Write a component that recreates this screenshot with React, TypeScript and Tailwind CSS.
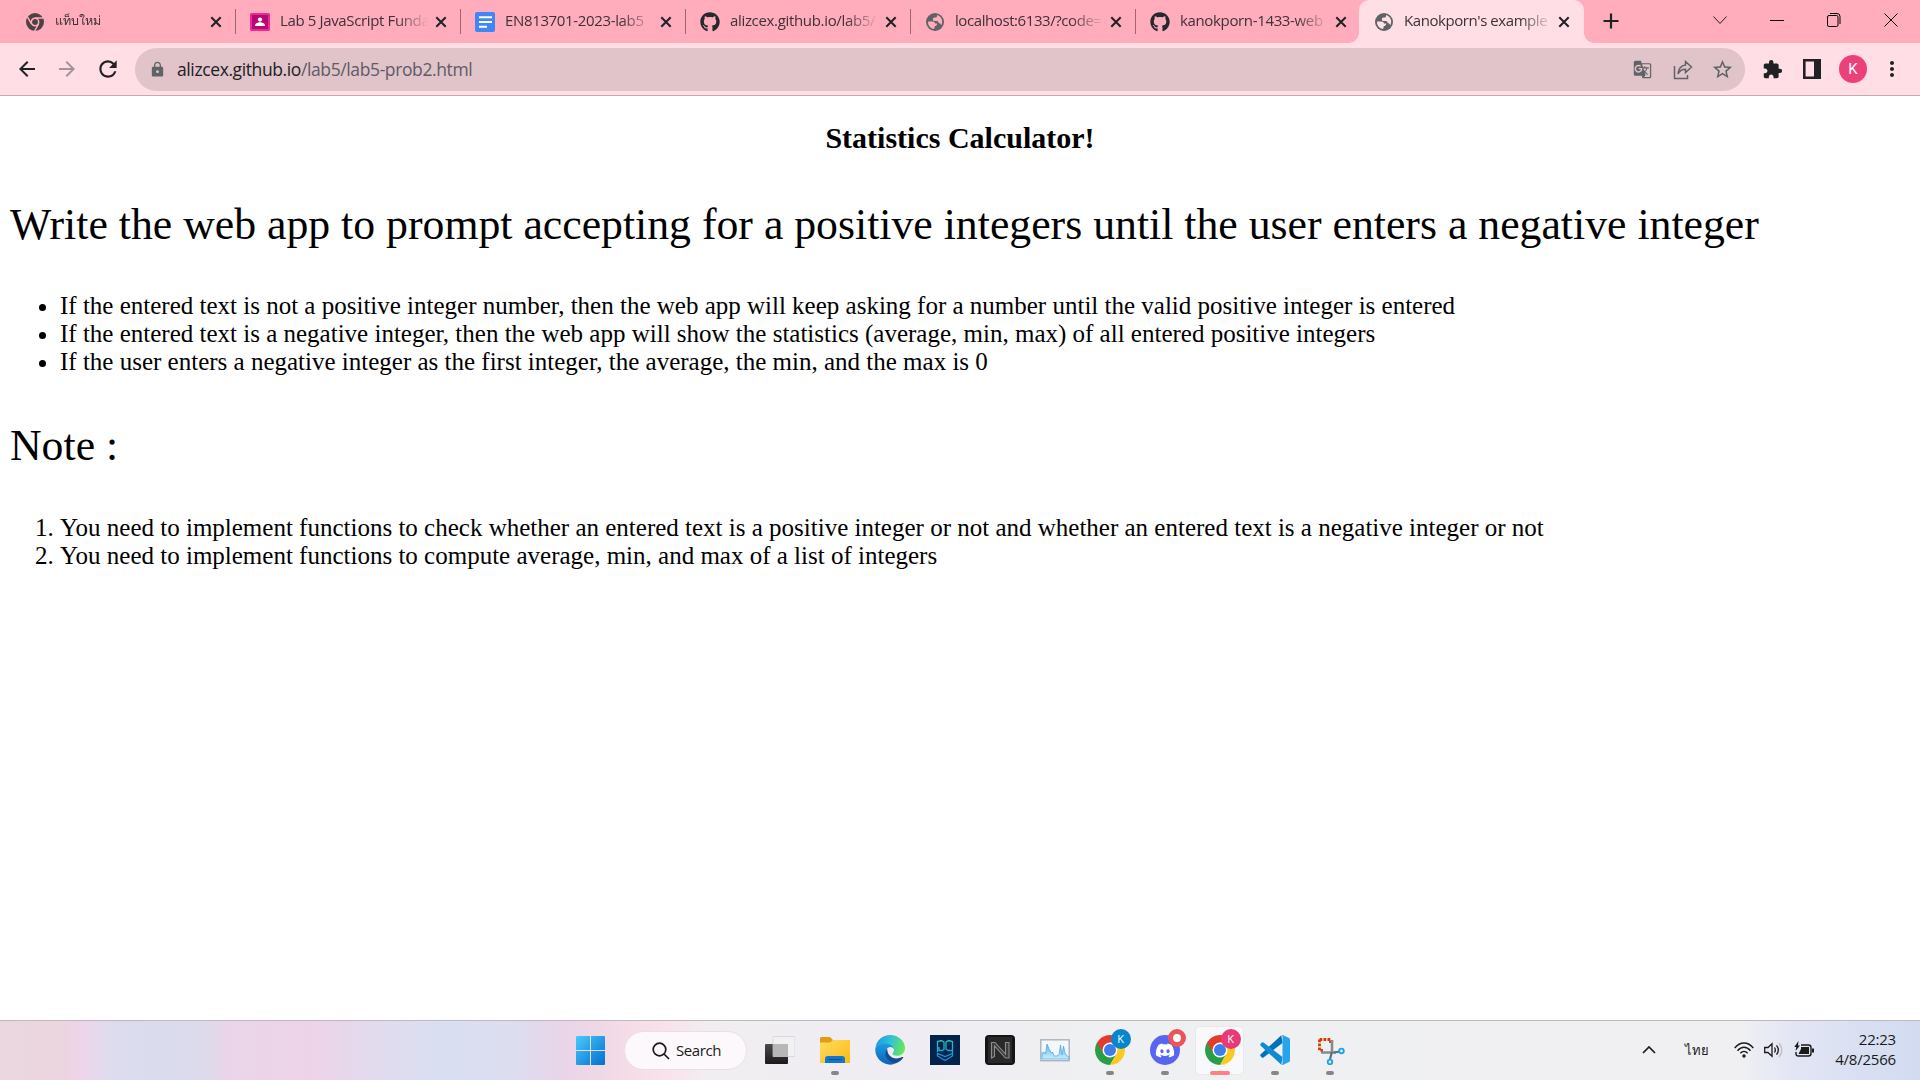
import React from "react";
import { FaGithub, FaDiscord } from "react-icons/fa";
import { MdExtension, MdStarBorder, MdMoreVert, MdLock, MdArrowBack, MdArrowForward, MdRefresh, MdGTranslate } from "react-icons/md";

type TabData = { icon: React.ReactNode; title: string; active?: boolean; spacing: string };

function ChromeMono() {
  return (
    <svg viewBox="0 0 18 18" className="h-[18px] w-[18px]">
      <circle cx="9" cy="9" r="9" fill="#4b4246" />
      <circle cx="9" cy="9" r="3.7" fill="none" stroke="#ffadbc" strokeWidth="1.5" />
      <path d="M9 4.9h8M5.500 11 1.600 4.200M12.500 11 8.600 18" stroke="#ffadbc" strokeWidth="1.5" />
    </svg>
  );
}

function Classroom() {
  return (
    <svg viewBox="0 0 20 18" className="h-[18px] w-5">
      <rect width="20" height="18" rx="1.5" fill="#f02895" />
      <rect x="2" y="2" width="16" height="14" fill="#b80672" />
      <circle cx="10" cy="6.6" r="2.1" fill="#fff" />
      <path d="M5 13c0-3 3-3.700 5-3.700s5 .7 5 3.700z" fill="#fff" />
    </svg>
  );
}

function Docs() {
  return (
    <svg viewBox="0 0 20 20" className="h-5 w-5">
      <rect width="20" height="20" rx="2" fill="#4285f4" />
      <path d="M4 5.200h13M4 10h13M4 14.800h8" stroke="#fff" strokeWidth="1.9" />
    </svg>
  );
}

function Globe({ land }: { land: string }) {
  return (
    <svg viewBox="0 0 18 18" className="h-[18px] w-[18px]">
      <circle cx="9" cy="9" r="9" fill="#5f6368" />
      <g fill={land}>
        <path d="M2 8.400h5q2 .2 2 2.100h2.200q0 2-1.400 2.400H8.700v1.700q-.3 1.200-1.400 1.400A7.200 7.200 0 0 1 2 8.400z" />
        <path d="M11 2q5 1.500 5.200 7-.2 2-1 3.300-.7-2.100-2.500-2.200-.2-2.200-1.700-2.200H8.300q-1.500-.2-1.500-1.700 0-1.500 1.800-1.700H10q1-.3 1-1.500z" />
      </g>
    </svg>
  );
}

const Git = () => <FaGithub className="h-[20px] w-5 text-[#24292f]" />;

const tabs: TabData[] = [
  { icon: <ChromeMono />, title: "แท็บใหม่", spacing: "pt-px text-[12.5px]" },
  { icon: <Classroom />, title: "Lab 5 JavaScript Funda", spacing: "text-[15px] tracking-[-0.36px]" },
  { icon: <Docs />, title: "EN813701-2023-lab5", spacing: "text-[15px] tracking-[-0.35px]" },
  { icon: <Git />, title: "alizcex.github.io/lab5/", spacing: "text-[15px] tracking-[-0.33px]" },
  { icon: <Globe land="#ffadbc" />, title: "localhost:6133/?code=", spacing: "text-[15px] tracking-[-0.42px]" },
  { icon: <Git />, title: "kanokporn-1433-web", spacing: "text-[15px] tracking-[-0.35px]" },
  { icon: <Globe land="#ffdee5" />, title: "Kanokporn's example", active: true, spacing: "text-[15px] tracking-[-0.43px]" },
];

function Cross() {
  return (
    <svg viewBox="0 0 12 12" className="h-3 w-3 shrink-0">
      <path d="M1.300 1.300l9.400 9.400M10.700 1.300l-9.400 9.400" stroke="#202124" strokeWidth="2" />
    </svg>
  );
}

function Tab({ tab }: { tab: TabData }) {
  return (
    <div className={tab.active ? "relative flex h-[43px] w-[225px] items-center rounded-t-[10px] bg-[#ffdee5] pl-[15px] pr-[14px]" : "relative flex h-[43px] w-[225px] items-center pl-[14px] pr-[14px]"}>
      <span className="flex w-5 shrink-0 justify-center">{tab.icon}</span>
      <span className={`ml-[10px] -mt-[2px] w-[149px] shrink-0 whitespace-nowrap text-[#3c3237] [mask-image:linear-gradient(to_right,#000_116px,transparent_149px)] ${tab.spacing}`}>
        {tab.title}
      </span>
      <span className="ml-auto flex"><Cross /></span>
      {tab.active ? (
        <>
          <span className="absolute -left-[10px] bottom-0 h-[10px] w-[10px] bg-[radial-gradient(circle_at_0_0,transparent_9.5px,#ffdee5_10px)]" />
          <span className="absolute -right-[10px] bottom-0 h-[10px] w-[10px] bg-[radial-gradient(circle_at_100%_0,transparent_9.5px,#ffdee5_10px)]" />
        </>
      ) : null}
    </div>
  );
}

function TabStrip() {
  return (
    <div className="flex h-[43px] bg-[#ffadbc] pl-[11px]">
      {tabs.map((t, i) => (
        <div key={t.title} className={i === 6 ? "relative -ml-[2px]" : "relative"}>
          <Tab tab={t} />
          {i < 5 ? <span className="absolute right-0 top-[9px] h-[25px] w-px bg-[#99686f]" /> : null}
        </div>
      ))}
      <svg viewBox="0 0 16 16" className="ml-[19px] mt-[13px] h-4 w-4"><path d="M8 .5v15M.5 8h15" stroke="#202124" strokeWidth="2.2" /></svg>
      <div className="ml-auto flex pr-[22px]">
        <svg viewBox="0 0 14 14" className="mr-[43px] mt-[13px] h-[14px] w-[14px]" fill="none" stroke="#202124"><path d="M.5 3.500 7 10.500l6.500-7" /></svg>
        <svg viewBox="0 0 14 14" className="mr-[43px] mt-[13px] h-[14px] w-[14px]"><path d="M0 7.500h14" stroke="#000" /></svg>
        <svg viewBox="0 0 14 14" className="mr-[43px] mt-[13px] h-[14px] w-[14px]" fill="none" stroke="#000"><rect x=".5" y="2.500" width="10.500" height="11" rx="1.500" /><path d="M3 .5h7a3 3 0 0 1 3 3V11" /></svg>
        <svg viewBox="0 0 14 14" className="mt-[13px] h-[14px] w-[14px]"><path d="M.5.5l13 13M13.500.5l-13 13" stroke="#000" /></svg>
      </div>
    </div>
  );
}

function Toolbar() {
  return (
    <div className="flex h-[53px] items-start border-b border-[#c3adb3] bg-[#ffdee5] pt-[5px]">
      <div className="flex w-[135px] items-center pl-[15px] pt-[8px] text-[#202124]">
        <MdArrowBack className="h-6 w-6" />
        <MdArrowForward className="ml-[16px] h-6 w-6 text-[#a5929a]" />
        <MdRefresh className="ml-[16px] h-[26px] w-[26px]" />
      </div>
      <div className="flex h-[43px] w-[1610px] items-center rounded-full bg-[#e0c4c9] pl-[13px]">
        <MdLock className="h-[17px] w-[19px] text-[#5f6368]" />
        <span className="ml-[10px] text-[17.5px] tracking-[-0.39px] text-[#5f5a66]"><span className="text-[#202124]">alizcex.github.io</span>/lab5/lab5-prob2.html</span>
        <div className="ml-auto flex items-center pr-[11px] text-[#5f6368]">
          <MdGTranslate className="h-[19px] w-[19px]" />
          <svg viewBox="0 0 20 20" className="ml-[21px] h-5 w-5" fill="none" stroke="currentColor" strokeWidth="1.5"><path d="M1.500 6v12.500h13V15M12.500 1.500 18.500 7l-6 5.500V9.300C9 9.300 6.500 11 5 14c.5-5 3-8.500 7.500-9z" /></svg>
          <MdStarBorder className="ml-[18px] h-[23px] w-[23px]" />
        </div>
      </div>
      <div className="flex flex-1 items-center pl-[17px] pt-[7px] text-[#202124]">
        <MdExtension className="h-[21px] w-[21px]" />
        <svg viewBox="0 0 18 20" className="ml-[20px] h-5 w-[18px]"><path d="M1.300 1.300h15.400v17.400H1.300z" fill="none" stroke="#202124" strokeWidth="2.600" /><path d="M11 0h7v20h-7z" fill="#202124" /></svg>
        <span className="ml-[18px] flex h-7 w-7 items-center justify-center rounded-full bg-[#ec407a] font-[Roboto] text-[15px] text-white">K</span>
        <MdMoreVert className="ml-[13px] h-6 w-6" />
      </div>
    </div>
  );
}

function Page() {
  return (
    <main className="h-[924px] bg-white px-[10px] font-['Liberation_Serif',serif] text-black">
      <h1 className="pt-[25px] text-center text-[30px] leading-[34px] font-bold">Statistics Calculator!</h1>
      <p className="mt-[44px] text-[43.75px] leading-[50px] whitespace-nowrap">Write the web app to prompt accepting for a positive integers until the user enters a negative integer</p>
      <ul className="mt-[43px] list-disc pl-[50px] text-[25px] leading-[28px]">
        <li>If the entered text is not a positive integer number, then the web app will keep asking for a number until the valid positive integer is entered</li>
        <li>If the entered text is a negative integer, then the web app will show the statistics (average, min, max) of all entered positive integers</li>
        <li>If the user enters a negative integer as the first integer, the average, the min, and the max is 0</li>
      </ul>
      <p className="mt-[44px] text-[43.75px] leading-[50px]">Note :</p>
      <ol className="mt-[44px] list-decimal pl-[50px] text-[25px] leading-[28px]">
        <li>You need to implement functions to check whether an entered text is a positive integer or not and whether an entered text is a negative integer or not</li>
        <li>You need to implement functions to compute average, min, and max of a list of integers</li>
      </ol>
    </main>
  );
}

function WindowsLogo() {
  return (
    <svg viewBox="0 0 29 29" className="h-[29px] w-[29px]">
      <defs><linearGradient id="win" gradientUnits="userSpaceOnUse" x1="0" y1="0" x2="29" y2="29"><stop stopColor="#4cc9fc" /><stop offset="1" stopColor="#0070cf" /></linearGradient></defs>
      <path d="M1 0h13v14H0V1q0-1 1-1zM15 0h13q1 0 1 1v13H15zM0 15h14v14H1q-1 0-1-1zM15 15h14v13q0 1-1 1H15z" fill="url(#win)" />
    </svg>
  );
}

function TaskView() {
  return (
    <svg viewBox="0 0 30 30" className="h-[30px] w-[30px]">
      <defs><linearGradient id="tv" x1="0" y1="0" x2="0" y2="1"><stop stopColor="#4a4a4a" /><stop offset="1" stopColor="#1b1b1b" /></linearGradient></defs>
      <rect y="9" width="23" height="20" rx="1" fill="url(#tv)" />
      <path d="M8 2.500q0-1 1-1h20q1 0 1 1v18q0 1-1 1H8z" fill="#f1f1f1" stroke="#d0d0d0" strokeWidth=".7" />
      <path d="M8 9h15v12.500H8z" fill="#b7b7b7" />
    </svg>
  );
}

function Folder() {
  return (
    <svg viewBox="0 0 30 30" className="h-[30px] w-[30px]">
      <defs><linearGradient id="fo" x1="0" y1="0" x2="1" y2="1"><stop stopColor="#ffdc62" /><stop offset="1" stopColor="#fbb917" /></linearGradient></defs>
      <path d="M0 3.500q0-1.500 1.500-1.500H10l3 3h15.500q1.500 0 1.500 1.500V15H0z" fill="#e19d0c" />
      <path d="M0 7.500h10l3-2.500h15.500Q30 5 30 6.500V28H0z" fill="url(#fo)" />
      <path d="M5 28v-4q0-3 3-3h14q3 0 3 3v4z" fill="#1077cf" />
      <path d="M9 24.500h12" stroke="#0a4b8d" strokeWidth="1.200" strokeLinecap="round" />
    </svg>
  );
}

function Edge() {
  return (
    <svg viewBox="0 0 30 30" className="h-[30px] w-[30px]">
      <defs>
        <linearGradient id="ea" x1="0" y1=".4" x2="1" y2=".6"><stop stopColor="#1b9de2" /><stop offset=".5" stopColor="#35c4cf" /><stop offset="1" stopColor="#66eb4f" /></linearGradient>
        <linearGradient id="eb" x1="0" y1="0" x2="0" y2="1"><stop stopColor="#1b9de2" /><stop offset="1" stopColor="#0c62b8" /></linearGradient>
      </defs>
      <path d="M.3 13C1.500 5 8 0 15 0c9 0 15 6.500 15 13 0 5-3.800 7.800-8 7.800-3.500 0-5-1.300-4.500-2.300 1-1.500 1.500-2.400 1.500-3.800 0-3.500-4-5.700-8.500-5.700C6 9 2 10.500.3 13z" fill="url(#ea)" />
      <path d="M.2 14C1 10.500 5.500 8.500 10 8.500c5 0 8.800 2.500 9 6-.5-1.500-2-2.500-3.500-2.500-4 0-5.500 4.500-4.500 8.500 1.200 5 5.500 8 10 7.800C13 32.500 0 26.500.2 14z" fill="url(#eb)" />
      <path d="M12.300 13.500c-2.300 2-2.600 5.500-1.300 8.500 2 4.500 6 6.500 10 6.300 3-.9 5.600-3 7.200-5.500.4-.8-.2-1.100-.9-.7-8.300 3.900-15.500-1.100-15-8.600z" fill="#104d93" />
    </svg>
  );
}

function PgIcon() {
  return (
    <svg viewBox="0 0 30 30" className="h-[30px] w-[30px]">
      <defs><linearGradient id="pg" gradientUnits="userSpaceOnUse" x1="0" y1="5" x2="0" y2="26"><stop stopColor="#28c5b6" /><stop offset="1" stopColor="#1687e4" /></linearGradient></defs>
      <path d="M0 0h30v30H0z" fill="#03234b" />
      <path d="M7.500 17V6.500l4-1L14 7v7.500l-2 1H9V12M22.500 15.500H18l-2-1.500V7l2.500-1.500 4 1V21L15 25.500 7.500 21v-2.500l7.500 3 7.500-3" fill="none" stroke="url(#pg)" strokeWidth="1.300" />
    </svg>
  );
}

function NIcon() {
  return (
    <svg viewBox="0 0 30 30" className="h-[30px] w-[30px]">
      <rect width="30" height="30" rx="4" fill="#151515" /><path d="M3 2h24v26H3z" fill="#292929" />
      <path d="M6.500 23V7.500H10L20.500 19V7.500H24V23h-3.500L9.500 11v10.500z" fill="#3c3c3c" stroke="#8d8d8d" strokeWidth="1.100" />
    </svg>
  );
}

function Monitor() {
  return (
    <svg viewBox="0 0 30 30" className="h-[30px] w-[30px]">
      <defs><linearGradient id="mo" x1="0" y1="0" x2="0" y2="1"><stop stopColor="#61b5e8" /><stop offset="1" stopColor="#c9edfc" /></linearGradient></defs>
      <rect x=".8" y="4.800" width="28.400" height="20.900" fill="#f3f8fc" stroke="#a8b4c0" strokeWidth="1.400" />
      <path d="M2 24v-6l2-1 1.500 2L7 9l2 5 2 3.500h2l1 3.500h3l2-1 1.500-10 1.500 10 1.500-9 1.500 7 2 3 2 1v2z" fill="url(#mo)" stroke="#4aa5de" strokeWidth=".7" />
    </svg>
  );
}

function Chrome() {
  return (
    <svg viewBox="0 0 30 30" className="h-[30px] w-[30px]">
      <path d="M2.010 7.500A15 15 0 0 0 15 30l6.500-11.250L15 15z" fill="#289e49" />
      <path d="M27.990 7.500A15 15 0 0 1 15 30l6.500-11.250L15 7.500z" fill="#fcc91f" />
      <path d="M2.010 7.500 8.500 18.750 15 15V7.500h12.990A15 15 0 0 0 2.010 7.500z" fill="#e33b2e" />
      <circle cx="15" cy="15" r="7.500" fill="#fff" /><circle cx="15" cy="15" r="6" fill="#3b7ded" />
    </svg>
  );
}

function VsCode() {
  return (
    <svg viewBox="0 0 30 30" className="h-[30px] w-[30px]">
      <path d="M.7 19.200 21.300.3 22.500 8 3.500 22.500q-.8.600-1.600 0L.6 21.200q-.8-1 .1-2z" fill="#0072b9" />
      <path d="M.7 10.800 21.300 29.700 22.500 22 3.500 7.500q-.8-.6-1.600 0L.6 8.800q-.8 1 .1 2z" fill="#0d8bd5" />
      <path d="M21.300.3q.9-.6 2-.1l5.700 2.700q1 .5 1 1.600v21q0 1.100-1 1.600l-5.700 2.700q-1.100.5-2-.1 1.200.2 1.200-1.200V1.500q0-1.400-1.200-1.200z" fill="#28a4ee" />
    </svg>
  );
}

function Snip() {
  return (
    <svg viewBox="0 0 30 30" className="h-[30px] w-[30px]" fill="none">
      <path d="M4.500 4.500h11v3.500M4.500 4.500v11h3.500" stroke="#d83b01" strokeWidth="2.800" strokeDasharray="2.800 1.200" />
      <path d="M17 5v12M6 17.500h15" stroke="#858b91" strokeWidth="2.600" />
      <path d="M17 17l-2 7M19 17.500l6-1" stroke="#4f6f8c" strokeWidth="2.200" />
      <circle cx="15" cy="27" r="2.300" stroke="#1aa0ea" strokeWidth="1.800" /><circle cx="26.500" cy="16" r="2.300" stroke="#1aa0ea" strokeWidth="1.800" />
    </svg>
  );
}

type App = { icon: React.ReactNode; badge?: React.ReactNode; dot?: boolean; active?: boolean };

const apps: App[] = [
  { icon: <TaskView /> },
  { icon: <Folder />, dot: true },
  { icon: <Edge /> },
  { icon: <PgIcon /> },
  { icon: <NIcon /> },
  { icon: <Monitor /> },
  { icon: <Chrome />, badge: <span className="flex h-[20px] w-[20px] items-center justify-center rounded-full bg-[#0686cc] text-[11px] text-white">K</span>, dot: true },
  { icon: <span className="flex h-[30px] w-[30px] items-center justify-center rounded-full bg-[#5865f2]"><FaDiscord className="h-[19px] w-[20px] text-white" /></span>, badge: <span className="block h-[18px] w-[18px] rounded-full border-[5px] border-[#ec5558] bg-white" />, dot: true },
  { icon: <Chrome />, badge: <span className="flex h-[20px] w-[20px] items-center justify-center rounded-full bg-[#e93a78] text-[11px] text-white">K</span>, active: true },
  { icon: <VsCode />, dot: true },
  { icon: <Snip />, dot: true },
];

function Taskbar() {
  return (
    <footer className="flex h-[60px] border-t border-[#bfb9bf] bg-[linear-gradient(90deg,#ead7e0_0px,#ebd5df_60px,#eed4ea_82px,#dddcee_110px,#d9dcee_160px,#dcdaeb_205px,#e9d5e9_225px,#edd3e8_310px,#e2daed_370px,#d9dff2_450px,#dddcee_520px,#ead4e7_565px,#f2dbe6_615px,#f9e2eb_665px,#f1eef1_710px,#efedf3_900px,#eff0f2_1100px,#f0f0f3_1740px,#e2e5f4_1795px,#d2dbf1_1920px)]">
      <div className="ml-[576px] flex pt-[15px]"><WindowsLogo /></div>
      <div className="ml-[19px] mt-[10px] flex h-[39px] w-[123px] items-center rounded-full border border-[#e9e0e6] bg-[#fdf8fb] pl-[27px]">
        <svg viewBox="0 0 18 18" className="h-[18px] w-[18px]" fill="none" stroke="#1a1a1a" strokeWidth="1.700"><circle cx="7.500" cy="7.500" r="6.300" /><path d="m12 12 5 5" /></svg>
        <span className="ml-[6px] text-[15px] tracking-[-0.4px] text-[#1a1a1a]">Search</span>
      </div>
      <div className="ml-[5px] flex">
        {apps.map((a, i) => (
          <div key={i} className="flex w-[55px] justify-center pt-[5px]">
            <div className={a.active ? "relative flex h-[49px] w-[49px] justify-center rounded-[5px] border border-[#e9e9ec] bg-[#f9f9fb] pt-[8px]" : "relative flex h-[49px] w-[49px] justify-center pt-[9px]"}>
              <span className="relative block h-[30px] w-[30px]">
                {a.icon}
                {a.badge ? <span className="absolute -right-[6px] -top-[6px]">{a.badge}</span> : null}
              </span>
              {a.dot ? <span className="absolute bottom-0 h-1 w-2 rounded-full bg-[#868686]" /> : null}
              {a.active ? <span className="absolute -bottom-px h-1 w-5 rounded-full bg-[#ff8084]" /> : null}
            </div>
          </div>
        ))}
      </div>
      <div className="ml-auto flex items-center pb-[2px] text-[#1a1a1a]">
        <svg viewBox="0 0 14 8" className="h-2 w-[14px]" fill="none" stroke="currentColor" strokeWidth="1.700"><path d="m1 7 6-6 6 6" /></svg>
        <span className="ml-[29px] w-[22px] pt-[3px] text-[13px]">ไทย</span>
        <svg viewBox="0 0 20 16" className="ml-[27px] h-4 w-5" fill="none" stroke="currentColor" strokeWidth="1.400"><path d="M.7 6C6-.6 14-.6 19.300 6M3.500 8.700c4-4.600 9-4.600 13 0M6.300 11.300c2.400-2.600 5-2.600 7.400 0" /><circle cx="10" cy="14" r="1" fill="currentColor" /></svg>
        <svg viewBox="0 0 20 18" className="ml-[10px] h-[18px] w-5" fill="none" stroke="currentColor" strokeWidth="1.300"><path d="M.7 6.500H4L8 2.800v12.400L4 11.500H.7zM10.500 6.500q1.700 2.500 0 5M12.500 4.300q3.700 4.700 0 9.400" /><path d="M15 2q5.500 7 0 14" stroke="#bcbcc0" /></svg>
        <svg viewBox="0 0 20 16" className="ml-[10px] h-4 w-5 overflow-visible"><path d="M7 3h7.500Q17 3 17 5.500v6q0 2.500-2.500 2.500h-10Q2 14 2 11.500V10" fill="none" stroke="currentColor" strokeWidth="1.400" /><path d="M7 5h8v7H4.500L7 7zM18 6.500h2v4h-2z" fill="currentColor" /><path d="M4.500-1 .3 5h2L1.500 9l4.500-5.500H4z" fill="currentColor" /></svg>
        <div className="ml-[20px] mb-[2px] w-[62px] text-right text-[15px] leading-[20px] tracking-[-0.2px]"><div>22:23</div><div>4/8/2566</div></div>
        <div className="w-[24px]" />
      </div>
    </footer>
  );
}

export default function App() {
  return (
    <div className="h-[1080px] w-[1920px] overflow-hidden bg-white font-['Open_Sans','Noto_Sans',sans-serif]">
      <TabStrip />
      <Toolbar />
      <Page />
      <Taskbar />
    </div>
  );
}
